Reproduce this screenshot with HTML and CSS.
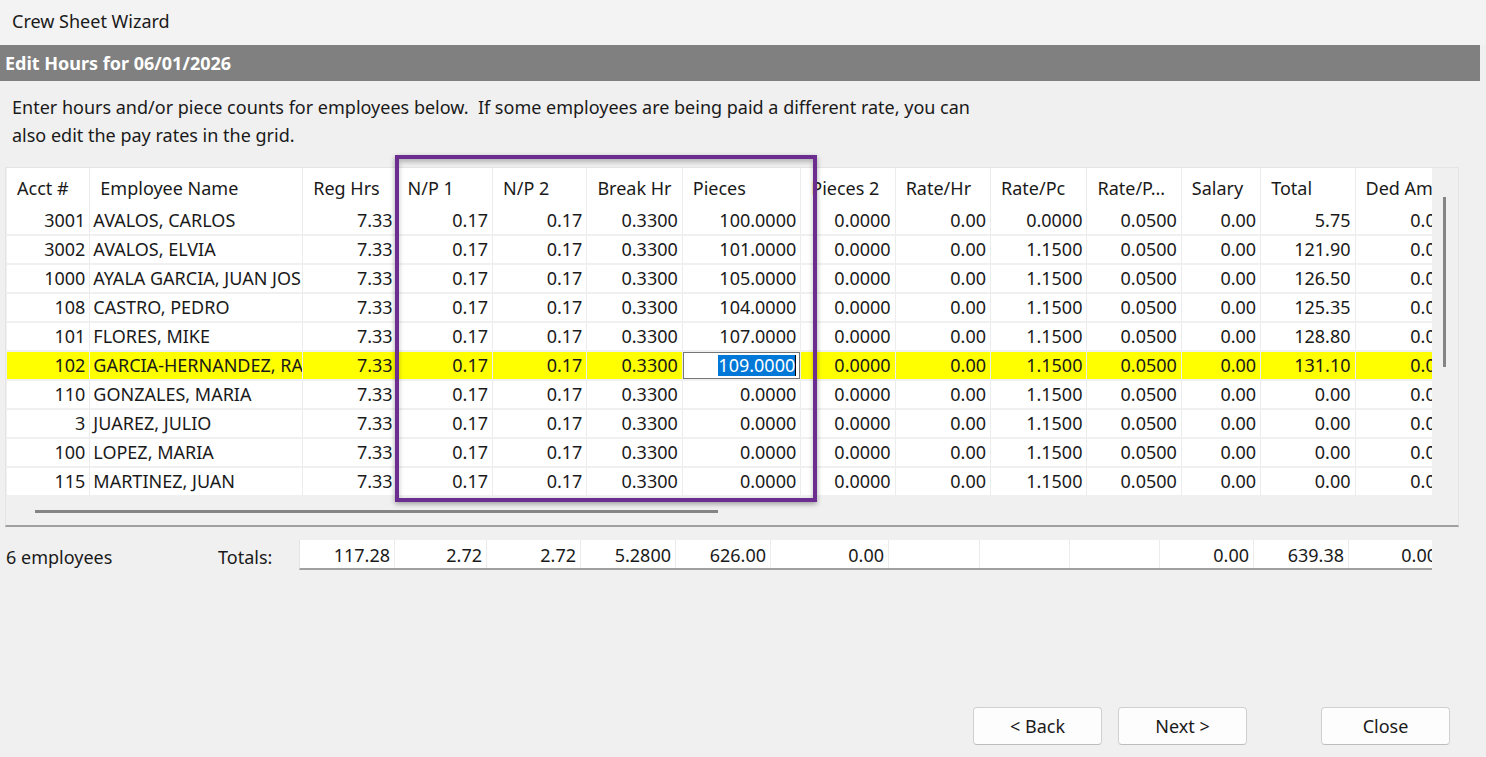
FILE: index.html
```html
<!DOCTYPE html>
<html lang="en">

<head>
  <meta charset="UTF-8">
  <title>Crew Sheet Wizard</title>
  <link rel="stylesheet" href="styles.css">
</head>

<body>
  <div id="title-bar">Crew Sheet Wizard</div>

  <div id="step-band">Edit Hours for 06/01/2026</div>

  <p id="intro">Enter hours and/or piece counts for employees below.&nbsp; If some employees are being paid a different rate, you can<br>also edit the pay rates in the grid.</p>

  <!-- Hours grid -->
  <div id="grid-box">
    <div id="grid-area">
      <table id="hours-grid">
        <colgroup>
          <col style="width:83px"><col style="width:212px"><col style="width:94px"><col style="width:95px">
          <col style="width:94px"><col style="width:95px"><col style="width:118px"><col style="width:94px">
          <col style="width:95px"><col style="width:96px"><col style="width:94px"><col style="width:79px">
          <col style="width:94px"><col style="width:95px">
        </colgroup>
        <thead>
          <tr>
            <th>Acct #</th><th>Employee Name</th><th>Reg Hrs</th><th>N/P 1</th><th>N/P 2</th><th>Break Hr</th>
            <th>Pieces</th><th>Pieces 2</th><th>Rate/Hr</th><th>Rate/Pc</th><th>Rate/P...</th><th>Salary</th>
            <th>Total</th><th>Ded Amt</th>
          </tr>
        </thead>
        <tbody>
          <tr><td>3001</td><td class="name">AVALOS, CARLOS</td><td>7.33</td><td>0.17</td><td>0.17</td><td>0.3300</td><td>100.0000</td><td>0.0000</td><td>0.00</td><td>0.0000</td><td>0.0500</td><td>0.00</td><td>5.75</td><td>0.00</td></tr>
          <tr><td>3002</td><td class="name">AVALOS, ELVIA</td><td>7.33</td><td>0.17</td><td>0.17</td><td>0.3300</td><td>101.0000</td><td>0.0000</td><td>0.00</td><td>1.1500</td><td>0.0500</td><td>0.00</td><td>121.90</td><td>0.00</td></tr>
          <tr><td>1000</td><td class="name">AYALA GARCIA, JUAN JOSE</td><td>7.33</td><td>0.17</td><td>0.17</td><td>0.3300</td><td>105.0000</td><td>0.0000</td><td>0.00</td><td>1.1500</td><td>0.0500</td><td>0.00</td><td>126.50</td><td>0.00</td></tr>
          <tr><td>108</td><td class="name">CASTRO, PEDRO</td><td>7.33</td><td>0.17</td><td>0.17</td><td>0.3300</td><td>104.0000</td><td>0.0000</td><td>0.00</td><td>1.1500</td><td>0.0500</td><td>0.00</td><td>125.35</td><td>0.00</td></tr>
          <tr><td>101</td><td class="name">FLORES, MIKE</td><td>7.33</td><td>0.17</td><td>0.17</td><td>0.3300</td><td>107.0000</td><td>0.0000</td><td>0.00</td><td>1.1500</td><td>0.0500</td><td>0.00</td><td>128.80</td><td>0.00</td></tr>
          <tr class="current"><td>102</td><td class="name">GARCIA-HERNANDEZ, RAMON</td><td>7.33</td><td>0.17</td><td>0.17</td><td>0.3300</td><td class="editing"><span class="edit-box"><span class="selected">109.0000</span><span class="caret"></span></span></td><td>0.0000</td><td>0.00</td><td>1.1500</td><td>0.0500</td><td>0.00</td><td>131.10</td><td>0.00</td></tr>
          <tr><td>110</td><td class="name">GONZALES, MARIA</td><td>7.33</td><td>0.17</td><td>0.17</td><td>0.3300</td><td>0.0000</td><td>0.0000</td><td>0.00</td><td>1.1500</td><td>0.0500</td><td>0.00</td><td>0.00</td><td>0.00</td></tr>
          <tr><td>3</td><td class="name">JUAREZ, JULIO</td><td>7.33</td><td>0.17</td><td>0.17</td><td>0.3300</td><td>0.0000</td><td>0.0000</td><td>0.00</td><td>1.1500</td><td>0.0500</td><td>0.00</td><td>0.00</td><td>0.00</td></tr>
          <tr><td>100</td><td class="name">LOPEZ, MARIA</td><td>7.33</td><td>0.17</td><td>0.17</td><td>0.3300</td><td>0.0000</td><td>0.0000</td><td>0.00</td><td>1.1500</td><td>0.0500</td><td>0.00</td><td>0.00</td><td>0.00</td></tr>
          <tr><td>115</td><td class="name">MARTINEZ, JUAN</td><td>7.33</td><td>0.17</td><td>0.17</td><td>0.3300</td><td>0.0000</td><td>0.0000</td><td>0.00</td><td>1.1500</td><td>0.0500</td><td>0.00</td><td>0.00</td><td>0.00</td></tr>
          <tr><td>116</td><td class="name">MENDOZA, LUIS</td><td>7.33</td><td>0.17</td><td>0.17</td><td>0.3300</td><td>0.0000</td><td>0.0000</td><td>0.00</td><td>1.1500</td><td>0.0500</td><td>0.00</td><td>0.00</td><td>0.00</td></tr>
        </tbody>
      </table>
    </div>
    <!-- scroll bars -->
    <div id="v-thumb"></div>
    <div id="h-thumb"></div>
  </div>

  <!-- Totals -->
  <div id="totals-bar">
    <div id="employee-count">6 employees</div>
    <div id="totals-label">Totals:</div>
    <div id="totals-box">
      <div class="tot" style="width:95px">117.28</div>
      <div class="tot" style="width:92px">2.72</div>
      <div class="tot" style="width:94px">2.72</div>
      <div class="tot" style="width:95px">5.2800</div>
      <div class="tot" style="width:95px">626.00</div>
      <div class="tot" style="width:118px">0.00</div>
      <div class="tot" style="width:91px"></div>
      <div class="tot" style="width:90px"></div>
      <div class="tot" style="width:90px"></div>
      <div class="tot" style="width:94px">0.00</div>
      <div class="tot" style="width:95px">639.38</div>
      <div class="tot last" style="width:83px"><span>0.00</span></div>
    </div>
  </div>

  <div id="buttons">
    <button class="wiz-button">&lt; Back</button>
    <button class="wiz-button">Next &gt;</button>
    <button class="wiz-button close">Close</button>
  </div>

  <!-- Highlight frame drawn over the grid -->
  <div id="highlight"></div>
</body>

</html>
```

FILE: styles.css
```css
body {
  margin: 0;
  font-family: "Noto Sans", "Open Sans", sans-serif;
  font-size: 18px;
  color: #1a1a1a;
  background-color: #f0f0f0;
  height: 757px;
  overflow: hidden;
  position: relative;
}

#title-bar {
  height: 45px;
  line-height: 42px;
  padding-left: 12px;
  background-color: #f3f3f3;
}

#step-band {
  height: 36px;
  line-height: 36px;
  margin-right: 6px;
  padding-left: 5px;
  background-color: #808080;
  color: white;
  font-weight: bold;
}

#intro {
  margin: 12px 0 0 12px;
  line-height: 28px;
}

/* Styles for the grid */
#grid-box {
  position: relative;
  margin: 18px 0 0 5px;
  width: 1452px;
  height: 357px;
  border-top: 1px solid #e4e4e4;
  border-left: 1px solid #e4e4e4;
  border-right: 1px solid #e4e4e4;
  border-bottom: 2px solid #a0a0a0;
}

#grid-area {
  margin-left: 1px;
  width: 1425px;
  height: 329px;
  background-color: white;
  overflow: hidden;
}

#hours-grid {
  table-layout: fixed;
  width: 1444px;
  border-spacing: 0;
}

#hours-grid th {
  height: 39px;
  padding: 0 0 0 10px;
  text-align: left;
  font-weight: normal;
  white-space: nowrap;
  overflow: hidden;
  border-right: 1px solid #ececec;
  box-sizing: border-box;
}

#hours-grid td {
  height: 29px;
  padding: 0 4px 1px 0;
  text-align: right;
  white-space: nowrap;
  overflow: hidden;
  border-right: 1px solid #ececec;
  border-bottom: 2px solid #f0f0f0;
  box-sizing: border-box;
}

#hours-grid td.name {
  text-align: left;
  padding-left: 3px;
  text-overflow: clip;
}

#hours-grid tr.current td {
  background-color: #ffff00;
}

#hours-grid td.editing {
  padding: 0;
  background-color: white !important;
}

.edit-box {
  display: flex;
  justify-content: flex-end;
  align-items: center;
  height: 27px;
  padding-right: 3px;
  border: 1px solid #767676;
  box-sizing: border-box;
  background-color: white;
}

.selected {
  background-color: #0078d7;
  color: white;
  line-height: 21px;
}

.caret {
  width: 1px;
  height: 21px;
  background-color: black;
}

#v-thumb {
  position: absolute;
  left: 1437px;
  top: 29px;
  width: 3px;
  height: 170px;
  background-color: #858585;
}

#h-thumb {
  position: absolute;
  left: 29px;
  top: 342px;
  width: 683px;
  height: 3px;
  background-color: #858585;
}

/* Styles for the totals line */
#totals-bar {
  display: flex;
  align-items: center;
  margin-top: 13px;
  padding-left: 6px;
}

#employee-count {
  width: 212px;
  padding-top: 4px;
}

#totals-label {
  width: 81px;
  padding-top: 4px;
}

#totals-box {
  display: flex;
  height: 30px;
  background-color: white;
  border-left: 1px solid #e4e4e4;
  border-bottom: 2px solid #a0a0a0;
  box-sizing: border-box;
}

.tot {
  line-height: 30px;
  padding-right: 4px;
  text-align: right;
  border-right: 1px solid #ececec;
  box-sizing: border-box;
}

/* last column is cut off by the grid edge, like the grid above */
.tot.last {
  border-right: none;
  padding-right: 0;
  overflow: hidden;
  white-space: nowrap;
}

.tot.last span {
  display: inline-block;
  width: 92px;
  padding-right: 4px;
  box-sizing: border-box;
}

/* Styles for the wizard buttons */
#buttons {
  display: flex;
  justify-content: flex-end;
  gap: 16px;
  margin-top: 137px;
  padding-right: 36px;
}

.wiz-button {
  width: 129px;
  height: 38px;
  font-family: inherit;
  font-size: 18px;
  color: #1a1a1a;
  background-color: #fdfdfd;
  border: 1px solid #d0d0d0;
  border-bottom-color: #bdbdbd;
  border-radius: 4px;
}

.wiz-button.close {
  margin-left: 58px;
}

/* Purple frame over the grid */
#highlight {
  position: absolute;
  left: 395px;
  top: 155px;
  width: 422px;
  height: 347px;
  box-sizing: border-box;
  border: 4px solid #6b2d90;
  box-shadow: 0 2px 5px rgba(0, 0, 0, 0.35), inset 0 3px 5px rgba(0, 0, 0, 0.25);
}
```
